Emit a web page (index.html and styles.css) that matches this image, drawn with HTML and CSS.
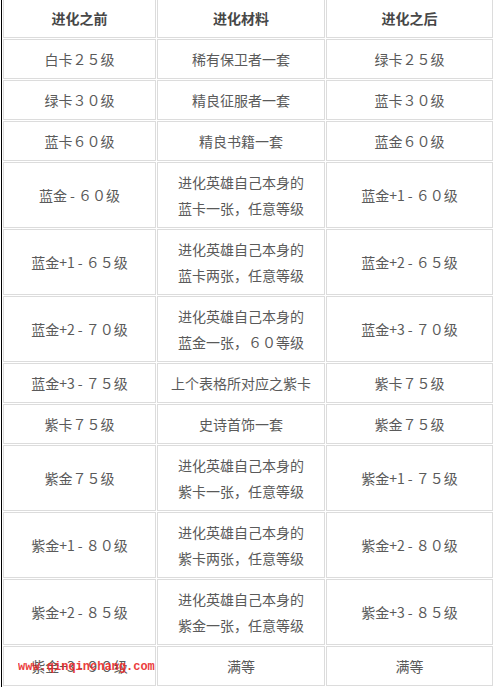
FILE: index.html
```html
<!DOCTYPE html>
<html lang="zh">
<head>
<meta charset="utf-8">
<title>进化表</title>
<link rel="stylesheet" href="styles.css">
</head>
<body>
<div class="page">
  <table class="evo">
    <thead>
      <tr>
        <th class="c1">进化之前</th>
        <th class="c2">进化材料</th>
        <th class="c3">进化之后</th>
      </tr>
    </thead>
    <tbody>
      <tr><td>白卡２５级</td><td>稀有保卫者一套</td><td>绿卡２５级</td></tr>
      <tr><td>绿卡３０级</td><td>精良征服者一套</td><td>蓝卡３０级</td></tr>
      <tr><td>蓝卡６０级</td><td>精良书籍一套</td><td>蓝金６０级</td></tr>
      <tr><td>蓝金 - ６０级</td><td>进化英雄自己本身的<br>蓝卡一张，任意等级</td><td>蓝金+1 - ６０级</td></tr>
      <tr><td>蓝金+1 - ６５级</td><td>进化英雄自己本身的<br>蓝卡两张，任意等级</td><td>蓝金+2 - ６５级</td></tr>
      <tr><td>蓝金+2 - ７０级</td><td>进化英雄自己本身的<br>蓝金一张，６０等级</td><td>蓝金+3 - ７０级</td></tr>
      <tr><td>蓝金+3 - ７５级</td><td>上个表格所对应之紫卡</td><td>紫卡７５级</td></tr>
      <tr><td>紫卡７５级</td><td>史诗首饰一套</td><td>紫金７５级</td></tr>
      <tr><td>紫金７５级</td><td>进化英雄自己本身的<br>紫卡一张，任意等级</td><td>紫金+1 - ７５级</td></tr>
      <tr><td>紫金+1 - ８０级</td><td>进化英雄自己本身的<br>紫卡两张，任意等级</td><td>紫金+2 - ８０级</td></tr>
      <tr><td>紫金+2 - ８５级</td><td>进化英雄自己本身的<br>紫金一张，任意等级</td><td>紫金+3 - ８５级</td></tr>
      <tr><td>紫金+3 - ９０级</td><td>满等</td><td>满等</td></tr>
    </tbody>
  </table>
  <div class="watermark">www.qinqinchang.com</div>
</div>
</body>
</html>
```

FILE: styles.css
```css
html, body {
  margin: 0;
  padding: 0;
  background: #fff;
}

body {
  overflow: hidden;
  font-family: "Microsoft YaHei", "Noto Sans CJK SC", "Noto Sans", sans-serif;
}

.page {
  position: relative;
  margin: -3px 0 0 1px;
  border-left: 1px solid #000;
  width: 493px;
}

.evo {
  width: 492px;
  table-layout: fixed;
  border-collapse: separate;
  border-spacing: 1px;
  font-size: 14px;
  line-height: 26px;
  color: #5a5a5a;
}

.evo th,
.evo td {
  box-sizing: border-box;
  border: 1px solid #dcdcdc;
  padding: 6px 4px;
  text-align: center;
  vertical-align: middle;
  font-weight: normal;
}

.evo th {
  font-weight: bold;
  color: #474747;
}

.c1 { width: 153px; }
.c2 { width: 168px; }
.c3 { width: 167px; }

.watermark {
  position: absolute;
  left: 16px;
  top: 663px;
  font-family: "Liberation Mono", monospace;
  font-size: 12px;
  line-height: 14px;
  font-weight: bold;
  color: #ea2a2a;
  opacity: 0.9;
}
```
